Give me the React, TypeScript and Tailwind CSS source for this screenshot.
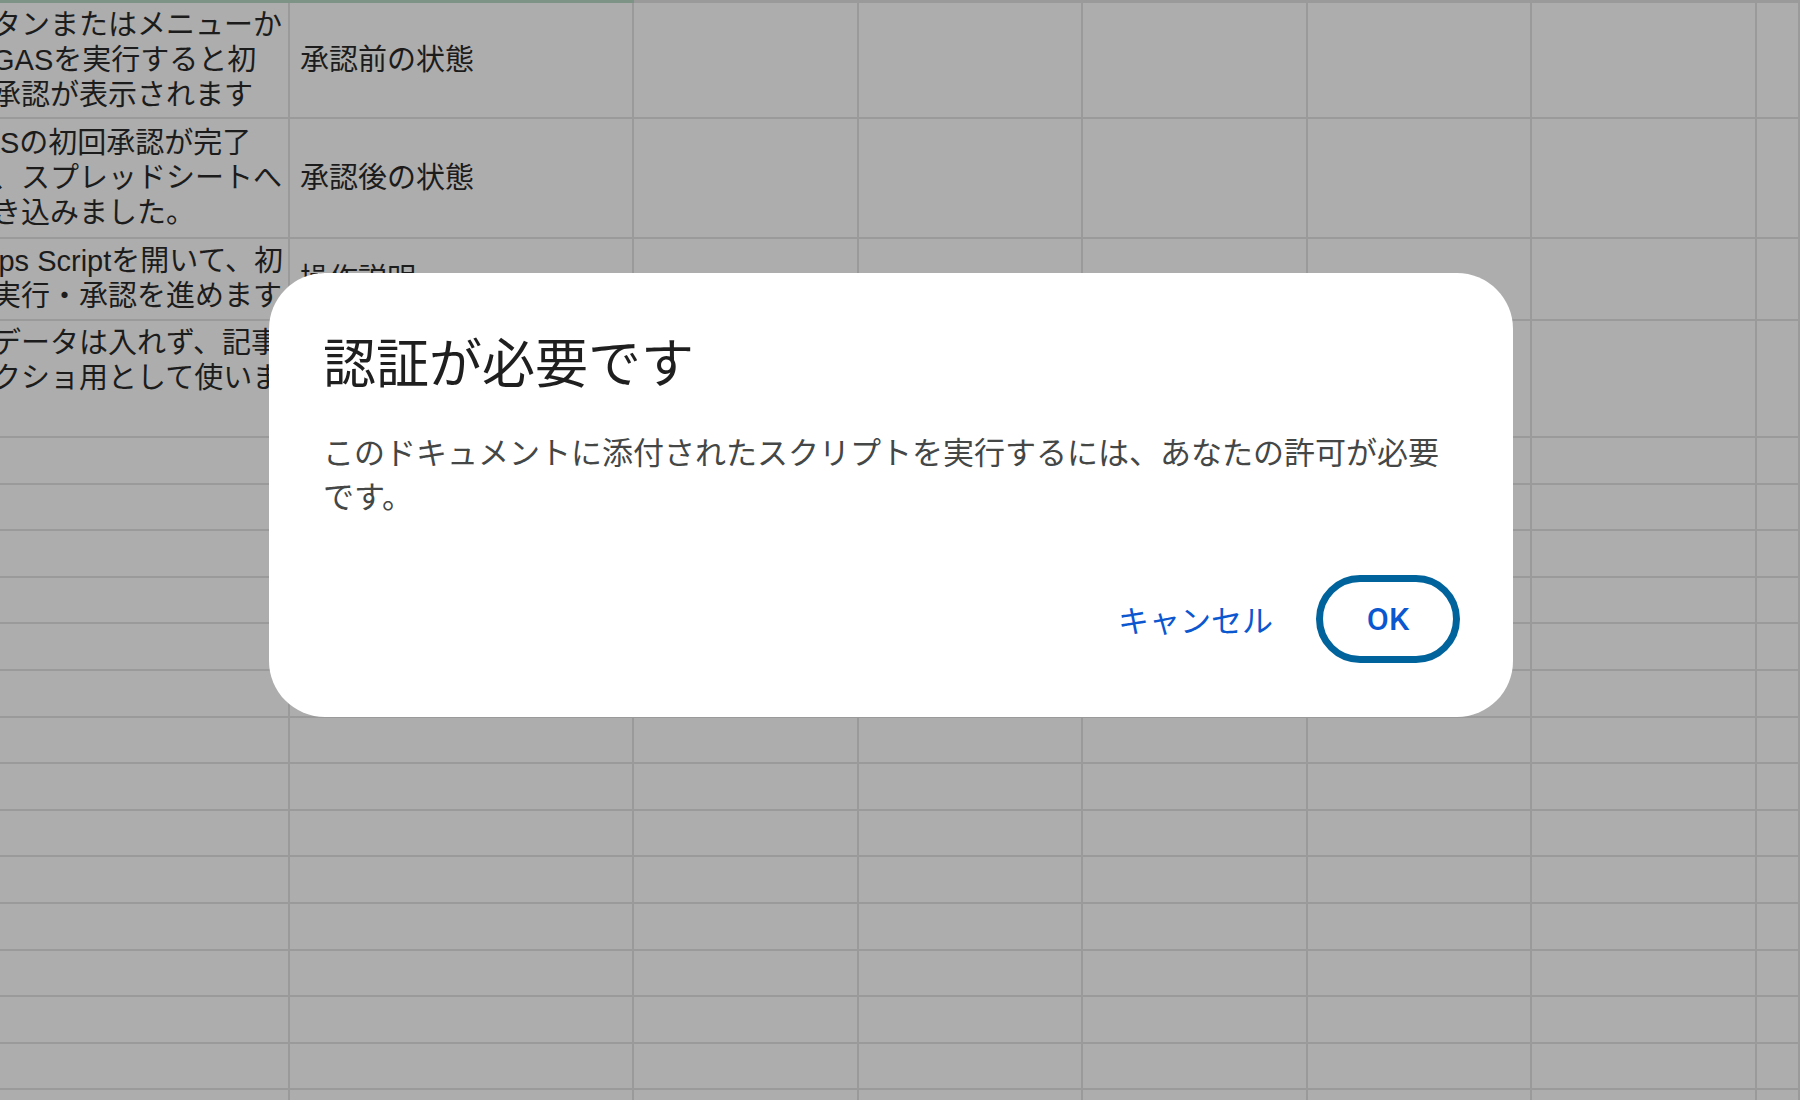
const SHEET_FONT = "font-['Liberation_Sans','Noto_Sans_CJK_JP',sans-serif]";
const UI_FONT = "font-['Noto_Sans_CJK_JP',sans-serif]";

type Line = { text: string; shift?: boolean };
type Row = { a: Line[]; b: string; top?: boolean };

const rows: Row[] = [
  {
    a: [{ text: "ボタンまたはメニューか" }, { text: "らGASを実行すると初" }, { text: "回承認が表示されます" }],
    b: "承認前の状態",
  },
  {
    a: [{ text: "GASの初回承認が完了", shift: true }, { text: "し、スプレッドシートへ" }, { text: "書き込みました。" }],
    b: "承認後の状態",
  },
  {
    a: [{ text: "Apps Scriptを開いて、初" }, { text: "回実行・承認を進めます" }],
    b: "操作説明",
  },
  {
    a: [{ text: "実データは入れず、記事" }, { text: "スクショ用として使います" }],
    b: "",
    top: true,
  },
];

const emptyRows = Array.from({ length: 15 });
const emptyCols = Array.from({ length: 6 });

function Cell({ children, className = "" }: { children?: React.ReactNode; className?: string }) {
  return (
    <div className={`border-r-2 border-b-2 border-[#9a9a9a] overflow-hidden flex ${className}`}>{children}</div>
  );
}

function Sheet() {
  return (
    <div className={`w-full h-full bg-[#adadad] text-[#1c1c1c] ${SHEET_FONT}`}>
      <div className="flex h-[3px]">
        <div className="w-[634px] bg-[#7d9386]" />
        <div className="flex-1 bg-[#9a9a9a]" />
      </div>
      <div className="grid grid-cols-[290px_344px_225px_224px_225px_224px_225px_1fr] grid-rows-[116px_120px_82px_117px_repeat(15,46.6px)]">
        {rows.map((r, i) => (
          <>
            <Cell key={`a${i}`} className={r.top ? "items-start pt-[5px]" : "items-center"}>
              <div className="-ml-[37px] text-[29px] leading-[35px] whitespace-nowrap">
                {r.a.map((line) => (
                  <div key={line.text} className={line.shift ? "-ml-[5px]" : ""}>
                    {line.text}
                  </div>
                ))}
              </div>
            </Cell>
            <Cell key={`b${i}`} className="items-center pl-[10px]">
              <span className="text-[29px] leading-[35px] whitespace-nowrap">{r.b}</span>
            </Cell>
            {emptyCols.map((_, j) => (
              <Cell key={`c${i}-${j}`} />
            ))}
          </>
        ))}
        {emptyRows.map((_, i) =>
          Array.from({ length: 8 }).map((__, j) => <Cell key={`e${i}-${j}`} />)
        )}
      </div>
    </div>
  );
}

function AuthDialog() {
  return (
    <div
      className={`absolute left-[269px] top-[273px] w-[1244px] h-[444px] bg-white rounded-[56px] pl-[54px] pr-[53px] pt-[54px] pb-[54px] flex flex-col ${UI_FONT}`}
    >
      <h1 className="text-[53px] leading-[66px] font-normal text-[#1f1f1f]">認証が必要です</h1>
      <p className="mt-[36px] text-[31px] leading-[44px] text-[#444746]">
        このドキュメントに添付されたスクリプトを実行するには、あなたの許可が必要です。
      </p>
      <div className="mt-auto flex items-center justify-end gap-[43px]">
        <button className="text-[31px] leading-[40px] text-[#0b57d0]">キャンセル</button>
        <button className="w-[144px] h-[88px] rounded-full border-[7px] border-[#00639b] text-[32px] font-medium text-[#0b57d0] font-['Roboto',sans-serif] flex items-center justify-center">
          OK
        </button>
      </div>
    </div>
  );
}

export default function App() {
  return (
    <div className="relative w-[1800px] h-[1100px] overflow-hidden">
      <Sheet />
      <AuthDialog />
    </div>
  );
}
